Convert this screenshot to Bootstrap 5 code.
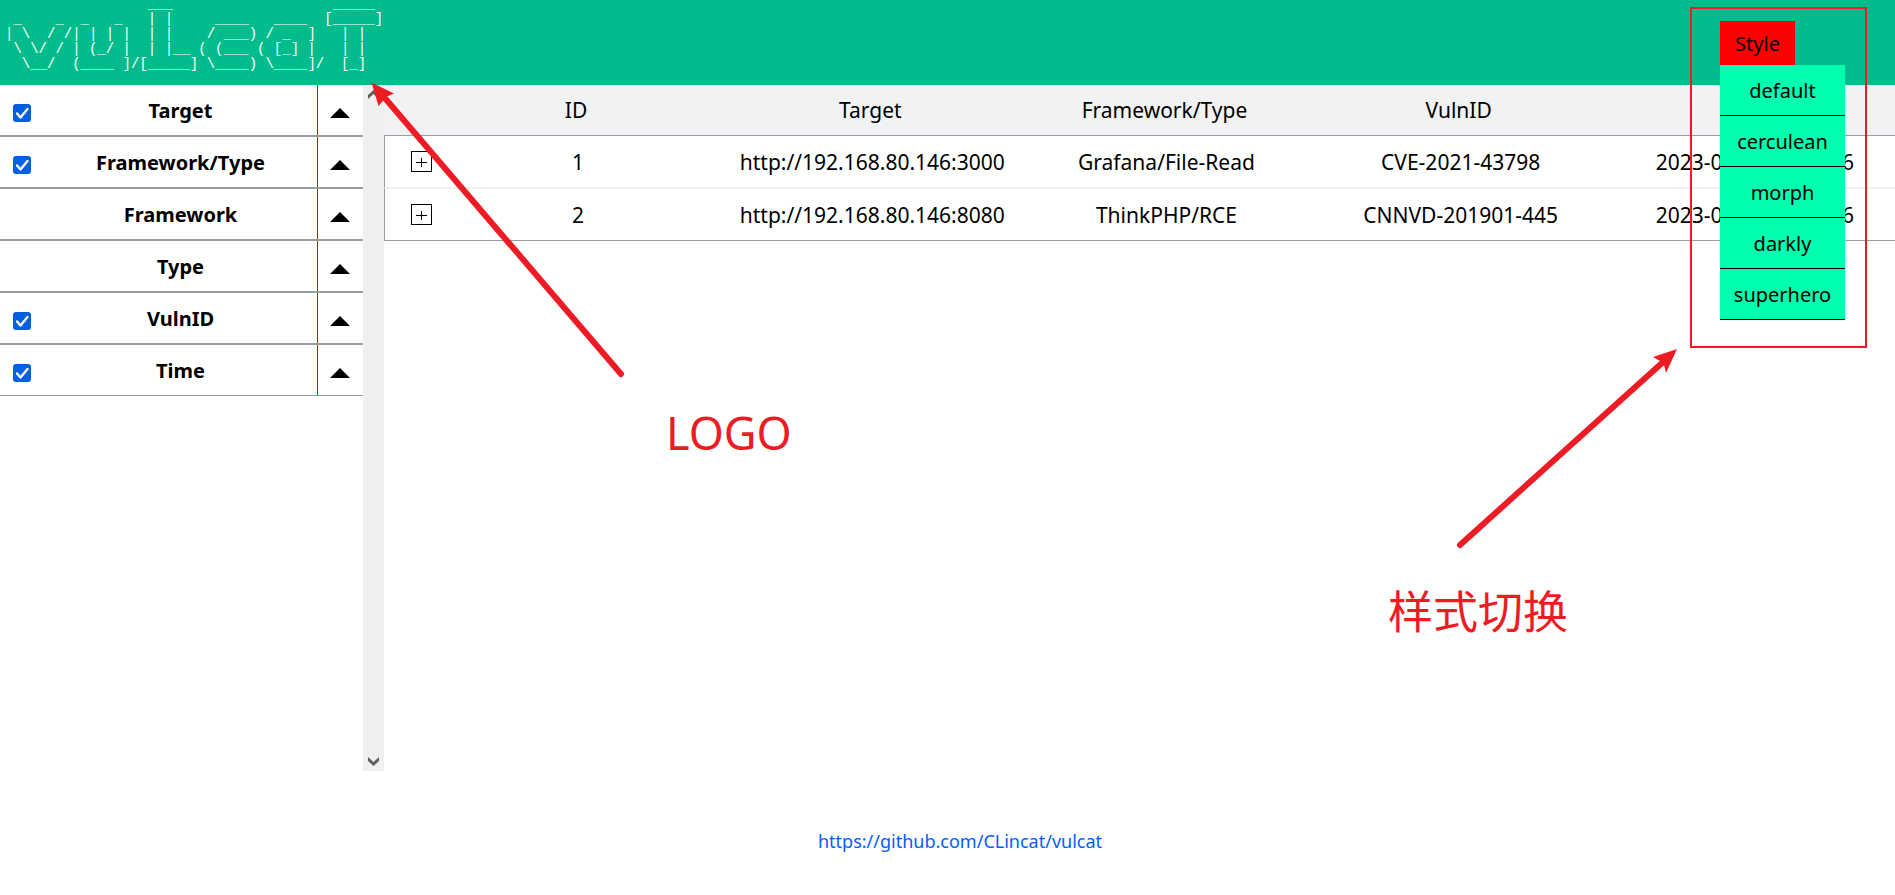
<!DOCTYPE html>
<html lang="zh">
<head>
<meta charset="utf-8">
<meta name="viewport" content="width=device-width, initial-scale=1">
<title>vulcat</title>
<link href="https://cdn.jsdelivr.net/npm/bootstrap@5.3.0/dist/css/bootstrap.min.css" rel="stylesheet">
<style>
  body { font-family: "Noto Sans", "Noto Sans CJK SC", sans-serif; color: #000; font-size: 21px; line-height: 28px; overflow-x: hidden; }
  .topbar { background: #00bc8c; height: 85px; }
  .ascii-logo { font: 14px/15px "Liberation Mono", monospace; color: #fff; margin: -3px 0 0; padding-left: 5px; overflow: visible; }

  .sidebar { width: 363px; }
  .filter-row { height: 52px; border: solid #9b9ca3; border-width: 1px 0; }
  .filter-row:first-child { height: 51px; border-top: 0; }
  .filter-name { font-weight: 700; font-size: 20px; padding-top: 1px; }
  .tick-cell { width: 44px; padding: 6px 0 0 13px; }
  .tick-cell .form-check-input { width: 18px; height: 18px; margin: 0; border: 0; border-radius: 3px; }
  .tick-cell .form-check-input:checked { background-color: #0060e0; background-image: url("data:image/svg+xml,%3csvg xmlns='http://www.w3.org/2000/svg' viewBox='0 0 18 18'%3e%3cpath d='M4 9.500l3.500 4L14.500 5' fill='none' stroke='%23fff' stroke-width='2.400' stroke-linecap='round' stroke-linejoin='round'/%3e%3c/svg%3e"); }
  .fold-btn { width: 46px; border: 0; border-left: 1px solid #f00000; background: none; padding: 6px 0 0 11px; }
  .scroll-track { width: 21px; background: #f0f0f0; }
  .scroll-track button { border: 0; background: none; padding: 5px; line-height: 0; }

  .result-area { overflow: hidden; }
  .result-table { width: calc(100% + 7px); table-layout: fixed; border-collapse: separate; border-spacing: 0; text-align: center; }
  .result-table th { background: #f1f2f4; font-weight: 400; height: 50px; padding: 0 4px 0 0; vertical-align: middle; border: 0; }
  .result-table td { height: 52px; padding: 0; vertical-align: middle; border-bottom: 2px solid #f0f0f0; white-space: nowrap; }
  .result-table tbody tr:first-child td { height: 54px; border-top: 1px solid #9b9ca3; }
  .result-table tbody tr:last-child td { border-bottom: 1px solid #9b9ca3; }
  .result-table td:first-child { border-left: 1px solid #9b9ca3; padding-left: 26px; }
  .expand-col { width: 47px; }
  .expand-btn { display: block; width: 21px; height: 21px; padding: 0; border: 1px solid #000; background: #fff; line-height: 0; }

  .style-switch { position: absolute; top: 7px; right: 28px; width: 177px; height: 341px; border: 2px solid #ed1c24; padding: 12px 20px 0 28px; z-index: 10; }
  .style-btn { display: block; width: 75px; height: 44px; border: 0; background: #f00; color: #000; font-size: 20px; padding: 2px 0 0; }
  .style-menu { background: #00ffae; }
  .style-menu a { display: block; height: 51px; border-bottom: 1px solid #000; color: #000; font-size: 20px; line-height: 52px; text-align: center; text-decoration: none; }

  .note-arrow, .note-text { position: absolute; z-index: 5; }
  .note-text { color: #ed1c24; font-size: 45px; line-height: 60px; white-space: nowrap; }
  .logo-arrow { left: 370px; top: 80px; }
  .logo-text { left: 666px; top: 403px; }
  .switch-arrow { right: 216px; top: 347px; }
  .switch-text { right: 327px; top: 580px; font-family: "Noto Sans CJK SC", sans-serif; }

  .site-footer { padding: 55px 0 40px 25px; }
  .site-footer a { color: #0060ff; font-size: 18px; text-decoration: none; }
</style>
</head>
<body class="d-flex flex-column min-vh-100 position-relative bg-white">

<header class="topbar d-flex flex-shrink-0 align-items-start">
<pre class="ascii-logo">
                 ___                   _____
 _    _  _   _   | |     ____   ____  [_____]
| \  / /| | | |  | |    / ___) / _  ]   | |
 \ \/ / | (_/ |  | |__ ( (___ ( [_] |   | |
  \__/  (____ ]/[_____] \____) \____]/  [_]</pre>
</header>

<div class="d-flex flex-grow-1">
  <aside class="sidebar flex-shrink-0">
    <div class="filter-row d-flex align-items-stretch">
      <div class="tick-cell d-flex align-items-center"><input class="form-check-input" type="checkbox" id="f-target" checked></div>
      <label for="f-target" class="filter-name flex-grow-1 d-flex align-items-center justify-content-center">Target</label>
      <button class="fold-btn d-flex align-items-center" type="button" aria-label="Target"><svg width="22" height="12" viewBox="0 0 22 12"><path d="M1 11 11 1l10 10z"/></svg></button>
    </div>
    <div class="filter-row d-flex align-items-stretch">
      <div class="tick-cell d-flex align-items-center"><input class="form-check-input" type="checkbox" id="f-ft" checked></div>
      <label for="f-ft" class="filter-name flex-grow-1 d-flex align-items-center justify-content-center">Framework/Type</label>
      <button class="fold-btn d-flex align-items-center" type="button" aria-label="Framework/Type"><svg width="22" height="12" viewBox="0 0 22 12"><path d="M1 11 11 1l10 10z"/></svg></button>
    </div>
    <div class="filter-row d-flex align-items-stretch">
      <div class="tick-cell"></div>
      <span class="filter-name flex-grow-1 d-flex align-items-center justify-content-center">Framework</span>
      <button class="fold-btn d-flex align-items-center" type="button" aria-label="Framework"><svg width="22" height="12" viewBox="0 0 22 12"><path d="M1 11 11 1l10 10z"/></svg></button>
    </div>
    <div class="filter-row d-flex align-items-stretch">
      <div class="tick-cell"></div>
      <span class="filter-name flex-grow-1 d-flex align-items-center justify-content-center">Type</span>
      <button class="fold-btn d-flex align-items-center" type="button" aria-label="Type"><svg width="22" height="12" viewBox="0 0 22 12"><path d="M1 11 11 1l10 10z"/></svg></button>
    </div>
    <div class="filter-row d-flex align-items-stretch">
      <div class="tick-cell d-flex align-items-center"><input class="form-check-input" type="checkbox" id="f-vuln" checked></div>
      <label for="f-vuln" class="filter-name flex-grow-1 d-flex align-items-center justify-content-center">VulnID</label>
      <button class="fold-btn d-flex align-items-center" type="button" aria-label="VulnID"><svg width="22" height="12" viewBox="0 0 22 12"><path d="M1 11 11 1l10 10z"/></svg></button>
    </div>
    <div class="filter-row d-flex align-items-stretch">
      <div class="tick-cell d-flex align-items-center"><input class="form-check-input" type="checkbox" id="f-time" checked></div>
      <label for="f-time" class="filter-name flex-grow-1 d-flex align-items-center justify-content-center">Time</label>
      <button class="fold-btn d-flex align-items-center" type="button" aria-label="Time"><svg width="22" height="12" viewBox="0 0 22 12"><path d="M1 11 11 1l10 10z"/></svg></button>
    </div>
  </aside>

  <div class="scroll-track flex-shrink-0 d-flex flex-column justify-content-between">
    <button type="button" aria-label="Scroll up"><svg width="11" height="9" viewBox="0 0 11 9"><path d="M0 9V5L5.500 0 11 5V9L5.500 4z" fill="#606060"/></svg></button>
    <button type="button" aria-label="Scroll down"><svg width="11" height="9" viewBox="0 0 11 9"><path d="M0 0v4L5.500 9 11 4V0L5.500 5z" fill="#606060"/></svg></button>
  </div>

  <main class="result-area flex-grow-1">
    <table class="result-table">
      <thead>
        <tr><th class="expand-col"></th><th>ID</th><th>Target</th><th>Framework/Type</th><th>VulnID</th><th>Time</th></tr>
      </thead>
      <tbody>
        <tr>
          <td><button class="expand-btn" type="button" aria-label="Expand 1"><svg width="19" height="19" viewBox="0 0 19 19"><path d="M4 10.500h11M9.500 6v9" stroke="#000"/></svg></button></td>
          <td>1</td><td>http://192.168.80.146:3000</td><td>Grafana/File-Read</td><td>CVE-2021-43798</td><td>2023-02-16 15:32:26</td>
        </tr>
        <tr>
          <td><button class="expand-btn" type="button" aria-label="Expand 2"><svg width="19" height="19" viewBox="0 0 19 19"><path d="M4 10.500h11M9.500 6v9" stroke="#000"/></svg></button></td>
          <td>2</td><td>http://192.168.80.146:8080</td><td>ThinkPHP/RCE</td><td>CNNVD-201901-445</td><td>2023-02-16 15:32:26</td>
        </tr>
      </tbody>
    </table>
  </main>
</div>

<footer class="site-footer text-center"><a href="https://github.com/CLincat/vulcat">https://github.com/CLincat/vulcat</a></footer>

<nav class="style-switch" aria-label="Style">
  <button class="style-btn" type="button">Style</button>
  <div class="style-menu">
    <a href="#default">default</a>
    <a href="#cerculean">cerculean</a>
    <a href="#morph">morph</a>
    <a href="#darkly">darkly</a>
    <a href="#superhero">superhero</a>
  </div>
</nav>

<svg class="note-arrow logo-arrow" width="256" height="300" viewBox="0 0 256 300" fill="#ed1c24"><path d="M1.500 2.500 24 13.500l-7 3-2 2-6.500 7.500z"/><path d="M14 17 251 294" stroke="#ed1c24" stroke-width="6" stroke-linecap="round"/></svg>
<div class="note-text logo-text">LOGO</div>
<svg class="note-arrow switch-arrow" width="224" height="202" viewBox="0 0 224 202" fill="#ed1c24"><path d="M222 2 198 10l7 4 4 4 2 8z"/><path d="M207 16 5 198" stroke="#ed1c24" stroke-width="6" stroke-linecap="round"/></svg>
<div class="note-text switch-text">样式切换</div>

<script src="https://cdn.jsdelivr.net/npm/bootstrap@5.3.0/dist/js/bootstrap.bundle.min.js"></script>
</body>
</html>
